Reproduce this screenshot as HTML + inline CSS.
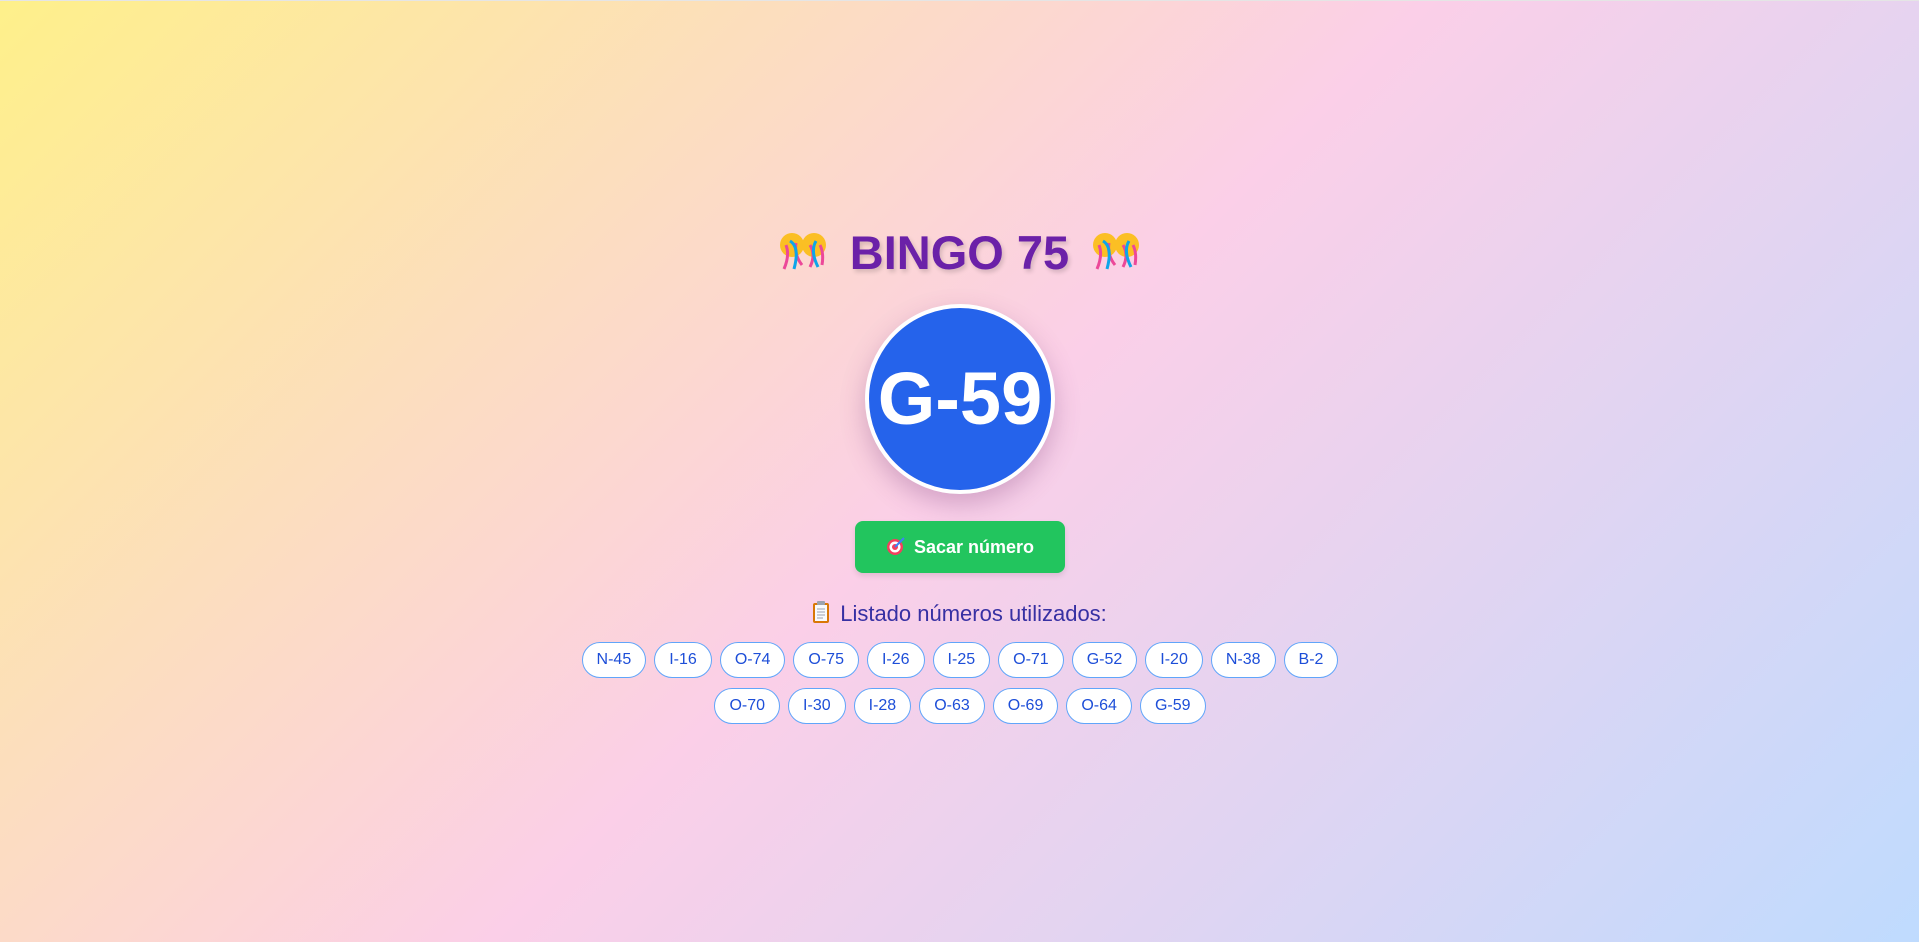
<!DOCTYPE html>
<html><head><meta charset="utf-8"><style>
html,body{margin:0;padding:0;width:1919px;height:942px;overflow:hidden}
body{background:linear-gradient(135deg,#fef08a 0%,#fbcfe8 50%,#bfdbfe 100%);font-family:"Liberation Sans",sans-serif;position:relative;border-top:1px solid #e5e5e5;box-sizing:border-box}
.title{position:absolute;left:0;width:1919px;top:222px;text-align:center;font-size:47px;font-weight:bold;color:#6b21a8;text-shadow:2px 3px 4px rgba(0,0,0,0.15);line-height:60px}
.title svg{vertical-align:middle;margin:0 22px;position:relative;top:-4px}
.ball{position:absolute;left:865px;top:303px;width:182px;height:182px;border:4px solid #fff;border-radius:50%;background:#2563eb;box-shadow:0 10px 25px rgba(120,60,120,0.3);color:#fff;font-weight:bold;font-size:74px;text-align:center;line-height:182px}
.btn{position:absolute;left:855px;top:520px;width:210px;height:52px;border-radius:8px;background:#22c55e;color:#fff;font-weight:bold;font-size:18px;text-align:center;line-height:52px;box-shadow:0 3px 6px rgba(0,0,0,0.1)}
.btn svg{vertical-align:middle;margin-right:8px;position:relative;top:-2px}
.h{position:absolute;left:0;width:1919px;top:598px;text-align:center;font-size:22px;color:#3730a3;line-height:30px}
.h svg{vertical-align:middle;margin-right:10px;position:relative;top:-3px}
.chips{position:absolute;left:570px;width:780px;top:641px;display:flex;flex-wrap:wrap;justify-content:center;gap:10px 8px}
.chips span{display:inline-block;height:34px;line-height:34px;padding:0 14px;border:1px solid #60a5fa;border-radius:18px;background:#fff;color:#1d4ed8;font-size:16px}
</style></head><body>
<div class="title"><svg width="50" height="44" viewBox="0 0 50 44"><circle cx="14" cy="14" r="12" fill="#fbbf24"/><circle cx="36" cy="14" r="12" fill="#fbbf24"/><path d="M8 14 q4 10 -2 24 M18 12 q-2 12 6 22 M32 14 q6 10 0 22 M42 14 q4 8 2 20" stroke="#ec4899" stroke-width="3" fill="none"/><path d="M12 10 q10 6 4 28 M38 10 q-6 10 2 26" stroke="#0ea5e9" stroke-width="3" fill="none"/></svg>BINGO 75<svg width="50" height="44" viewBox="0 0 50 44"><circle cx="14" cy="14" r="12" fill="#fbbf24"/><circle cx="36" cy="14" r="12" fill="#fbbf24"/><path d="M8 14 q4 10 -2 24 M18 12 q-2 12 6 22 M32 14 q6 10 0 22 M42 14 q4 8 2 20" stroke="#ec4899" stroke-width="3" fill="none"/><path d="M12 10 q10 6 4 28 M38 10 q-6 10 2 26" stroke="#0ea5e9" stroke-width="3" fill="none"/></svg></div>
<div class="ball">G-59</div>
<div class="btn"><svg width="20" height="20" viewBox="0 0 20 20"><circle cx="9" cy="11" r="8" fill="#f43f5e"/><circle cx="9" cy="11" r="5.5" fill="#fff"/><circle cx="9" cy="11" r="3" fill="#f43f5e"/><path d="M9 11 L18 2" stroke="#3b82f6" stroke-width="2"/></svg>Sacar número</div>
<div class="h"><svg width="18" height="24" viewBox="0 0 18 24"><rect x="1" y="3" width="16" height="20" rx="2" fill="#d97706"/><rect x="3" y="5" width="12" height="16" fill="#f8fafc"/><rect x="5" y="1" width="8" height="4" rx="1" fill="#9ca3af"/><path d="M5 9h8M5 12h8M5 15h8M5 18h6" stroke="#9ca3af" stroke-width="1"/></svg>Listado números utilizados:</div>
<div class="chips"><span>N-45</span><span>I-16</span><span>O-74</span><span>O-75</span><span>I-26</span><span>I-25</span><span>O-71</span><span>G-52</span><span>I-20</span><span>N-38</span><span>B-2</span><span>O-70</span><span>I-30</span><span>I-28</span><span>O-63</span><span>O-69</span><span>O-64</span><span>G-59</span></div>
</body></html>
